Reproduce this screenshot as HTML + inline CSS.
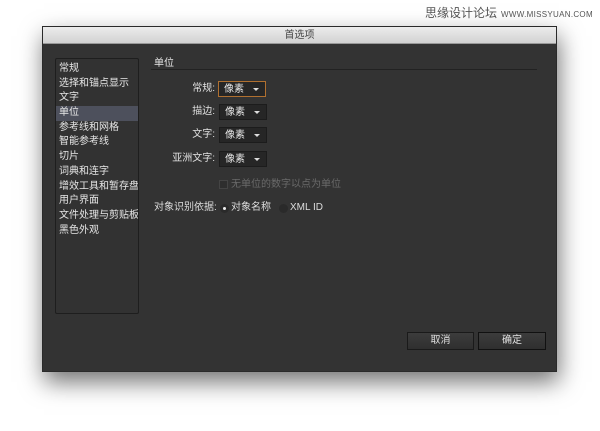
<!DOCTYPE html>
<html><head><meta charset="utf-8"><style>
*{margin:0;padding:0;box-sizing:border-box}
body{width:600px;height:431px;background:#fff;position:relative;overflow:hidden;font-family:"Liberation Sans","Noto Sans CJK SC",sans-serif;font-size:10px;color:#ddd;white-space:nowrap}
.wm{position:absolute;left:425px;top:5px;color:#555;font-size:12px;line-height:16px}
.wm span{font-size:8px;letter-spacing:0.3px;margin-left:4px}
.win{position:absolute;left:42px;top:26px;width:515px;height:346px;background:#333;box-shadow:2px 10px 22px rgba(0,0,0,.55);border:1px solid #2a2a2a}
.title{height:17px;background:linear-gradient(#ececec,#d2d2d2);color:#444;text-align:center;font-size:10px;line-height:17px;border-bottom:1px solid #999}
.side{position:absolute;left:12px;top:31px;width:84px;height:256px;border:1px solid #1e1e1e;border-radius:2px;background:#323232;padding-top:3px;overflow:hidden}
.side div{height:14.7px;line-height:14.7px;padding-left:3px;font-size:10px;color:#e6e6e6}
.side .sel{background:#4d505c}
.abs{position:absolute;line-height:14px}
.lbl{position:absolute;text-align:right;width:80px;font-size:10px;color:#e0e0e0;line-height:16px}
.dd{position:absolute;width:48px;height:16px;background:#262626;border:1px solid #1c1c1c;font-size:10px;line-height:15px;padding-left:5px;color:#e6e6e6}
.dd:after{content:"";position:absolute;right:6px;top:6px;border:3px solid transparent;border-top:3px solid #ddd;border-bottom:0}
.btn{position:absolute;height:18px;background:linear-gradient(#3c3c3c,#2f2f2f);border:1px solid #1a1a1a;text-align:center;line-height:16px;font-size:10px;color:#e0e0e0}
</style></head><body>
<div class="wm">思缘设计论坛<span>WWW.MISSYUAN.COM</span></div>
<div class="win">
<div class="title">首选项</div>
<div class="side">
<div>常规</div><div>选择和锚点显示</div><div>文字</div><div class="sel">单位</div><div>参考线和网格</div><div>智能参考线</div><div>切片</div><div>词典和连字</div><div>增效工具和暂存盘</div><div>用户界面</div><div>文件处理与剪贴板</div><div>黑色外观</div>
</div>
<div class="abs" style="left:111px;top:30px;color:#e6e6e6">单位</div>
<div class="abs" style="left:108px;top:42px;width:386px;height:1px;background:#222"></div>
<div class="lbl" style="left:92px;top:54px">常规:</div>
<div class="dd" style="left:175px;top:54px;border-color:#b07030">像素</div>
<div class="lbl" style="left:92px;top:77px">描边:</div>
<div class="dd" style="left:176px;top:77px">像素</div>
<div class="lbl" style="left:92px;top:100px">文字:</div>
<div class="dd" style="left:176px;top:100px">像素</div>
<div class="lbl" style="left:92px;top:124px">亚洲文字:</div>
<div class="dd" style="left:176px;top:124px">像素</div>
<div class="abs" style="left:176px;top:153px;width:9px;height:9px;border:1px solid #444;background:#2e2e2e"></div>
<div class="abs" style="left:188px;top:151px;color:#6a6a6a">无单位的数字以点为单位</div>
<div class="abs" style="left:111px;top:174px">对象识别依据:</div>
<div class="abs" style="left:177px;top:177px;width:9px;height:9px;border-radius:50%;background:#2a2a2a"></div>
<div class="abs" style="left:180px;top:180px;width:3px;height:3px;border-radius:50%;background:#eee"></div>
<div class="abs" style="left:188px;top:174px">对象名称</div>
<div class="abs" style="left:236px;top:177px;width:9px;height:9px;border-radius:50%;background:#2a2a2a"></div>
<div class="abs" style="left:247px;top:174px">XML ID</div>
<div class="btn" style="left:364px;top:305px;width:67px">取消</div>
<div class="btn" style="left:435px;top:305px;width:68px;border-color:#111">确定</div>
</div>
</body></html>
